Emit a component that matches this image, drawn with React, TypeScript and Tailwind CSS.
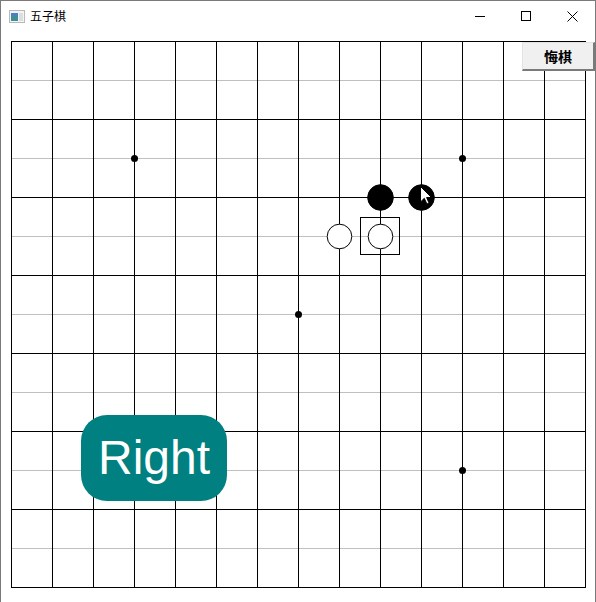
const COLS = Array.from({ length: 15 }, (_, i) => 11 + 41 * i);
const ROWS = Array.from({ length: 15 }, (_, i) => 41 + 39 * i);

const stars = [
  [134, 158],
  [462, 158],
  [298, 314],
  [462, 470],
];

const stones = [
  { x: 380, y: 197, black: true },
  { x: 421, y: 197, black: true },
  { x: 339, y: 236, black: false },
  { x: 380, y: 236, black: false },
];

function TitleBar() {
  return (
    <div className="flex h-[30px] items-center bg-white">
      <div className="flex flex-1 items-center gap-[5px] pl-[8px]">
        <svg width="16" height="13" viewBox="0 0 16 13">
          <rect x="0.5" y="0.5" width="15" height="12" fill="#f4f4f4" stroke="#b9b9b9" />
          <rect x="2" y="3" width="7" height="8" fill="#3f8f9a" />
          <rect x="2" y="3" width="7" height="3" fill="#4d7fc4" />
          <rect x="10" y="3" width="4" height="8" fill="#d9dede" />
        </svg>
        <span className="text-[12px] leading-none text-black [font-family:'Noto_Sans_CJK_SC',sans-serif]">
          五子棋
        </span>
      </div>
      <div className="flex h-full">
        <div className="flex w-[46px] items-center justify-center">
          <svg width="10" height="10" viewBox="0 0 10 10">
            <line x1="0" y1="5.5" x2="10" y2="5.5" stroke="#000" />
          </svg>
        </div>
        <div className="flex w-[46px] items-center justify-center">
          <svg width="10" height="10" viewBox="0 0 10 10">
            <rect x="0.5" y="0.5" width="9" height="9" fill="none" stroke="#000" />
          </svg>
        </div>
        <div className="flex w-[46px] items-center justify-center">
          <svg width="11" height="11" viewBox="0 0 11 11">
            <path d="M0.5 0.5 L10.5 10.5 M10.5 0.5 L0.5 10.5" stroke="#000" strokeWidth="1" />
          </svg>
        </div>
      </div>
    </div>
  );
}

function Board() {
  return (
    <svg
      width="594"
      height="571"
      viewBox="1 31 594 571"
      className="absolute inset-0"
      shapeRendering="crispEdges"
    >
      {ROWS.map((y, i) =>
        i % 2 === 1 ? (
          <line key={"g" + i} x1="11" y1={y + 0.5} x2="586" y2={y + 0.5} stroke="#c0c0c0" />
        ) : null
      )}
      {COLS.map((x, i) => (
        <line key={"v" + i} x1={x + 0.5} y1="41" x2={x + 0.5} y2="588" stroke="#000" />
      ))}
      {ROWS.map((y, i) =>
        i % 2 === 0 ? (
          <line key={"h" + i} x1="11" y1={y + 0.5} x2="586" y2={y + 0.5} stroke="#000" />
        ) : null
      )}
      <g shapeRendering="auto">
        {stars.map(([x, y], i) => (
          <circle key={i} cx={x + 0.5} cy={y + 0.5} r="3.5" fill="#000" />
        ))}
        {stones.map((s, i) => (
          <circle
            key={i}
            cx={s.x + 0.5}
            cy={s.y + 0.5}
            r={s.black ? 12.8 : 12.3}
            fill={s.black ? "#000" : "#fff"}
            stroke="#000"
            strokeWidth="1"
          />
        ))}
      </g>
      <rect x="360.5" y="217.5" width="39" height="37" fill="none" stroke="#000" />
      <g transform="translate(420.5 186.5)" shapeRendering="auto">
        <path
          d="M0 0 L0 15.5 L3.8 11.8 L6.4 17.6 L8.6 16.6 L6.1 11 L11 11 Z"
          fill="#fff"
          stroke="#000"
          strokeWidth="1"
          strokeLinejoin="miter"
        />
      </g>
    </svg>
  );
}

export default function App() {
  return (
    <div className="flex h-[602px] w-[596px] flex-col border-x border-t border-[#7a7a7a] bg-white">
      <TitleBar />
      <div className="relative flex-1 overflow-hidden bg-white">
        <Board />

        {/* undo button */}
        <button className="absolute left-[521px] top-[11px] flex h-[29px] w-[73px] items-center justify-center border border-b-2 border-r-2 border-t-[#e3e3e3] border-l-[#e3e3e3] border-b-[#7a7a7a] border-r-[#7a7a7a] bg-[#f0f0f0] text-[14px] font-bold leading-none text-black [font-family:'Noto_Sans_CJK_SC',sans-serif]">
          悔棋
        </button>

        {/* result badge */}
        <div className="absolute left-[80px] top-[384px] flex h-[86px] w-[146px] items-center justify-center rounded-[26px] bg-[#008080] text-[48px] text-white [font-family:'Liberation_Sans',Arial,sans-serif]">
          Right
        </div>
      </div>
    </div>
  );
}
